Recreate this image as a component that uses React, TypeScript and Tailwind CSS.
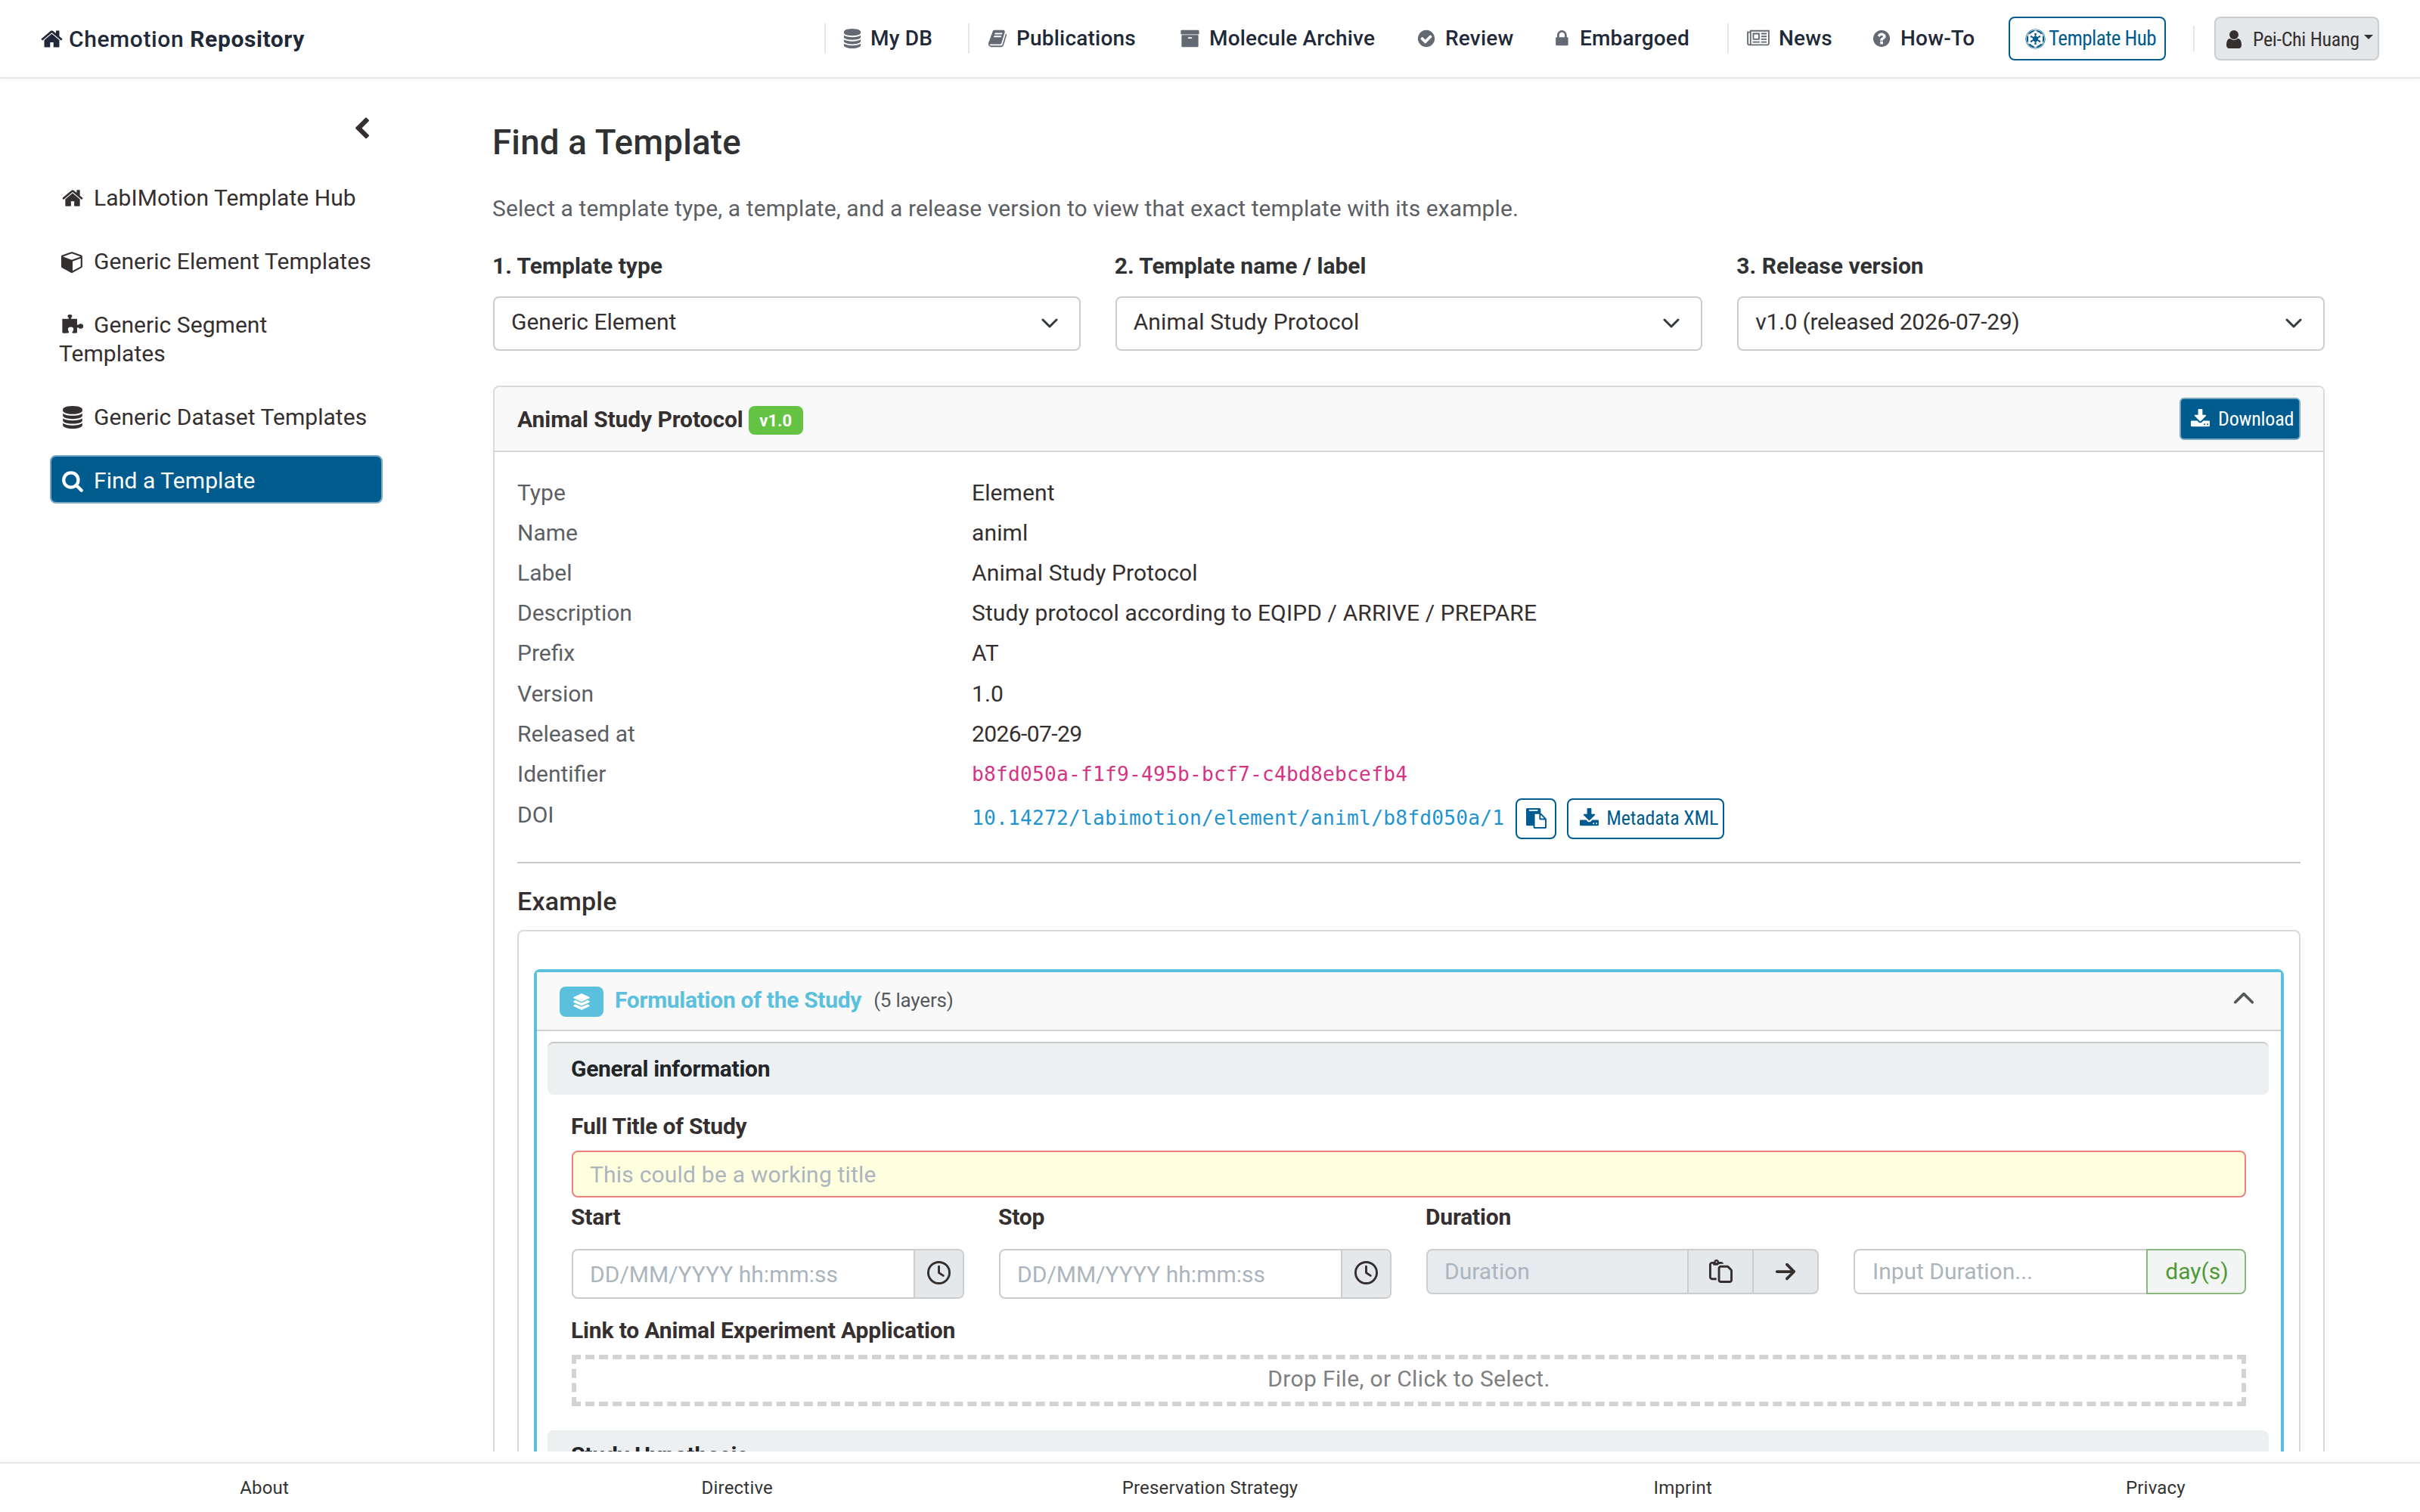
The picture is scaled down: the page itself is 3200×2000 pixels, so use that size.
import React from 'react';
import { FaArrowRight, FaChevronUp, FaEmpire, FaLayerGroup, FaRegClock, FaRegPaste } from 'react-icons/fa6';

interface GlyphProps {
  d: string;
  className?: string;
  viewBox?: string;
}

const Glyph: React.FC<GlyphProps> = ({ d, className, viewBox = '0 0 1792 1792' }) => (
  <svg viewBox={viewBox} fill="currentColor" className={className} aria-hidden="true">
    <path d={d} />
  </svg>
);

const ICONS = {
  home: 'M1472 992v480q0 26-19 45t-45 19h-384v-384h-256v384h-384q-26 0-45-19t-19-45v-480q0-1 .5-3t.5-3l575-474 575 474q1 2 1 6zm223-69l-62 74q-8 9-21 11h-3q-13 0-21-7l-692-577-692 577q-12 8-24 7-13-2-21-11l-62-74q-8-10-7-23.5t11-21.5l719-599q32-26 76-26t76 26l244 204v-195q0-14 9-23t23-9h192q14 0 23 9t9 23v408l219 182q10 8 11 21.5t-7 23.5z',
  cube: 'M896 1629l640-349v-636l-640 233v752zm-64-865l698-254-698-254-698 254zm832-252v768q0 35-18 65t-49 47l-704 384q-28 16-61 16t-61-16l-704-384q-31-17-49-47t-18-65v-768q0-40 23-73t61-47l704-256q22-8 44-8t44 8l704 256q38 14 61 47t23 73z',
  database: 'M832 768q237 0 443-43t325-127v170q0 69-103 128t-280 93.5-385 34.5-385-34.5-280-93.5-103-128v-170q119 84 325 127t443 43zm0 768q237 0 443-43t325-127v170q0 69-103 128t-280 93.5-385 34.5-385-34.5-280-93.5-103-128v-170q119 84 325 127t443 43zm0-384q237 0 443-43t325-127v170q0 69-103 128t-280 93.5-385 34.5-385-34.5-280-93.5-103-128v-170q119 84 325 127t443 43zm0-1152q208 0 385 34.5t280 93.5 103 128v128q0 69-103 128t-280 93.5-385 34.5-385-34.5-280-93.5-103-128v-128q0-69 103-128t280-93.5 385-34.5z',
  search: 'M1216 832q0-185-131.5-316.5t-316.5-131.5-316.5 131.5-131.5 316.5 131.5 316.5 316.5 131.5 316.5-131.5 131.5-316.5zm512 832q0 52-38 90t-90 38q-54 0-90-38l-343-342q-179 124-399 124-143 0-273.5-55.5t-225-150-150-225-55.5-273.5 55.5-273.5 150-225 225-150 273.5-55.5 273.5 55.5 225 150 150 225 55.5 273.5q0 220-124 399l343 343q37 37 37 90z',
  puzzle: 'M82 410H560Q600 410 592 350Q584 310 550 280Q500 235 500 180Q500 60 680 60Q860 60 860 180Q860 235 810 280Q776 310 768 350Q760 410 800 410H1250V830Q1250 900 1310 880Q1350 870 1400 830Q1450 790 1520 790Q1740 790 1740 990Q1740 1180 1520 1180Q1450 1180 1400 1130Q1350 1090 1310 1085Q1250 1080 1250 1150V1490Q1250 1530 1140 1530Q860 1560 860 1480Q860 1440 910 1390Q970 1330 970 1230Q970 1040 750 1040Q530 1040 530 1230Q530 1330 580 1390Q620 1440 600 1480Q580 1530 440 1530Q82 1570 82 1500Z',
  download: 'M1344 1344q0-26-19-45t-45-19-45 19-19 45 19 45 45 19 45-19 19-45zm256 0q0-26-19-45t-45-19-45 19-19 45 19 45 45 19 45-19 19-45zm128-224v320q0 40-28 68t-68 28h-1472q-40 0-68-28t-28-68v-320q0-40 28-68t68-28h465l135 136q58 56 136 56t136-56l136-136h464q40 0 68 28t28 68zm-325-569q17 41-14 70l-448 448q-18 19-45 19t-45-19l-448-448q-31-29-14-70 17-39 59-39h256v-448q0-26 19-45t45-19h256q26 0 45 19t19 45v448h256q42 0 59 39z',
  paste: 'M768 1664h896v-640h-416q-40 0-68-28t-28-68v-416h-384v1152zm256-1440v-64q0-13-9.5-22.5t-22.5-9.5h-704q-13 0-22.5 9.5t-9.5 22.5v64q0 13 9.5 22.5t22.5 9.5h704q13 0 22.5-9.5t9.5-22.5zm256 672h299l-299-299v299zm512 128v672q0 40-28 68t-68 28h-960q-40 0-68-28t-28-68v-160h-544q-40 0-68-28t-28-68v-1344q0-40 28-68t68-28h1088q40 0 68 28t28 68v328q21 13 36 28l408 408q28 28 48 76t20 88z',
  user: 'M1536 1399q0 109-62.5 187t-150.5 78h-854q-88 0-150.5-78t-62.5-187q0-85 8.5-160.5t31.5-152 58.5-131 94-89 134.5-34.5q131 128 313 128t313-128q76 0 134.5 34.5t94 89 58.5 131 31.5 152 8.5 160.5zm-256-887q0 159-112.5 271.5t-271.5 112.5-271.5-112.5-112.5-271.5 112.5-271.5 271.5-112.5 271.5 112.5 112.5 271.5z',
  check: 'M1412 734q0-28-18-46l-91-90q-19-19-45-19t-45 19l-408 407-226-226q-19-19-45-19t-45 19l-91 90q-18 18-18 46 0 27 18 45l362 362q19 19 45 19 27 0 46-19l543-543q18-18 18-45zm252 162q0 209-103 385.5t-279.5 279.5-385.5 103-385.5-103-279.5-279.5-103-385.5 103-385.5 279.5-279.5 385.5-103 385.5 103 279.5 279.5 103 385.5z',
  question: 'M1024 1376v-192q0-14-9-23t-23-9h-192q-14 0-23 9t-9 23v192q0 14 9 23t23 9h192q14 0 23-9t9-23zm256-672q0-88-55.5-163t-138.5-116-170-41q-243 0-371 213-15 24 8 42l132 100q7 6 19 6 16 0 25-12 53-68 86-92 34-24 86-24 48 0 85.5 26t37.5 59q0 38-20 61t-68 45q-63 28-115.5 86.5t-52.5 125.5v36q0 14 9 23t23 9h192q14 0 23-9t9-23q0-19 21.5-49.5t54.5-49.5q32-18 49-28.5t46-35 44.5-48 28-60.5 12.5-81zm384 192q0 209-103 385.5t-279.5 279.5-385.5 103-385.5-103-279.5-279.5-103-385.5 103-385.5 279.5-279.5 385.5-103 385.5 103 279.5 279.5 103 385.5z',
  lock: 'M640 768h512v-192q0-106-75-181t-181-75-181 75-75 181v192zm832 96v576q0 40-28 68t-68 28h-960q-40 0-68-28t-28-68v-576q0-40 28-68t68-28h32v-192q0-184 132-316t316-132 316 132 132 316v192h32q40 0 68 28t28 68z',
  archive: 'M1088 832q0-26-19-45t-45-19h-256q-26 0-45 19t-19 45 19 45 45 19h256q26 0 45-19t19-45zm576-192v960q0 26-19 45t-45 19h-1408q-26 0-45-19t-19-45v-960q0-26 19-45t45-19h1408q26 0 45 19t19 45zm64-448v256q0 26-19 45t-45 19h-1536q-26 0-45-19t-19-45v-256q0-26 19-45t45-19h1536q26 0 45 19t19 45z',
  newspaper: 'M1024 512h-384v384h384v-384zm128 640v128h-640v-128h640zm0-768v640h-640v-640h640zm640 768v128h-512v-128h512zm0-256v128h-512v-128h512zm0-256v128h-512v-128h512zm0-256v128h-512v-128h512zm-1536 960v-960h-128v960q0 26 19 45t45 19 45-19 19-45zm1664 0v-1088h-1536v1088q0 33-11 64h1483q26 0 45-19t19-45zm128-1216v1216q0 80-56 136t-136 56h-1664q-80 0-136-56t-56-136v-1088h256v-128h1792z',
  book: 'M1703 478q40 57 18 129l-275 906q-19 64-76.5 107.5t-122.5 43.5h-923q-77 0-148.5-53.5t-99.5-131.5q-24-67-2-127 0-4 3-27t4-37q1-8-3-21.5t-3-19.5q2-11 8-21t16.5-23.5 16.5-23.5q23-38 45-91.5t30-91.5q3-10 .5-30t-.5-28q3-11 17-28t17-23q21-36 42-92t25-90q1-9-2.5-32t.5-28q4-13 22-30.5t22-22.5q19-26 42.5-84.5t27.5-96.5q1-8-3-25.5t-2-26.5q2-8 9-18t18-23 17-21q8-12 16.5-30.5t15-35 16-36 19.5-32 26.5-23.5 36-11.5 47.5 5.5l-1 3q38-9 51-9h761q74 0 114 56t18 130l-274 906q-36 119-71.5 153.5t-128.5 34.5h-869q-27 0-38 15-11 16-1 43 24 70 144 70h923q29 0 56-15.5t35-41.5l300-987q7-22 5-57 38 15 59 43zm-1064 2q-4 13 2 22.5t20 9.5h608q13 0 25.5-9.5t16.5-22.5l21-64q4-13-2-22.5t-20-9.5h-608q-13 0-25.5 9.5t-16.5 22.5zm-83 256q-4 13 2 22.5t20 9.5h608q13 0 25.5-9.5t16.5-22.5l21-64q4-13-2-22.5t-20-9.5h-608q-13 0-25.5 9.5t-16.5 22.5z',
  chevronLeft: 'M1427 301l-531 531 531 531q19 19 19 45t-19 45l-166 166q-19 19-45 19t-45-19l-742-742q-19-19-19-45t19-45l742-742q19-19 45-19t45 19l166 166q19 19 19 45t-19 45z',
};

const NavItem = ({ icon, label, className = '' }: { icon: React.ReactNode; label: string; className?: string }) => (
  <a className={`flex items-center text-[28px] font-medium tracking-[0.2px] text-[#1f2937] ${className}`}>
    <span className="mr-3 flex text-[#646a74]">{icon}</span>
    {label}
  </a>
);

const Header = () => (
  <header className="flex h-[104px] shrink-0 items-center border-b-2 border-[#e5e7eb] bg-white pl-[53px] pr-[54px] shadow-[0_2px_6px_rgba(0,0,0,0.04)]">
    <div className="flex items-center text-[30px] tracking-[0.6px] text-[#1f2937]">
      <Glyph d={ICONS.home} className="mr-[7px] h-[31px] w-[31px]" />
      <span className="font-medium whitespace-pre">Chemotion </span>
      <span className="font-bold">Repository</span>
    </div>
    <nav className="ml-auto flex items-center">
      <div className="flex h-10 items-center border-l-2 border-[#e5e7eb]">
        <NavItem label="My DB" className="w-[188px] pl-[23px]" icon={<Glyph d={ICONS.database} viewBox="0 0 1664 1792" className="h-[26px] w-6" />} />
      </div>
      <div className="flex h-10 items-center border-l-2 border-[#e5e7eb]">
        <NavItem label="Publications" className="w-[278px] pl-6" icon={<Glyph d={ICONS.book} className="h-[26px] w-[26px]" />} />
        <NavItem label="Molecule Archive" className="w-[313px]" icon={<Glyph d={ICONS.archive} className="h-[26px] w-[27px]" />} />
        <NavItem label="Review" className="w-[183px]" icon={<Glyph d={ICONS.check} className="h-[26px] w-[26px]" />} />
        <NavItem label="Embargoed" className="w-[228px]" icon={<Glyph d={ICONS.lock} viewBox="240 0 1472 1792" className="h-[26px] w-[21px]" />} />
      </div>
      <div className="flex h-10 items-center border-l-2 border-[#e5e7eb]">
        <NavItem label="News" className="w-[190px] pl-6" icon={<Glyph d={ICONS.newspaper} viewBox="0 0 2048 1792" className="h-[26px] w-[30px]" />} />
        <NavItem label="How-To" className="w-[180px]" icon={<Glyph d={ICONS.question} viewBox="64 0 1728 1792" className="h-[26px] w-[25px]" />} />
      </div>
      <button className="flex h-[58px] w-[208px] items-center rounded-lg border-2 border-[#005b8f] pl-5 font-['Roboto_Condensed','Roboto',sans-serif] font-stretch-semi-condensed text-[27px] tracking-[-0.5px] whitespace-nowrap text-[#005b8f]">
        <FaEmpire className="mr-1 h-[27px] w-[27px] shrink-0" />
        Template Hub
      </button>
      <div className="ml-9 h-[34px] w-0.5 bg-[#e5e7eb]" />
      <button className="ml-[26px] flex h-[58px] w-[218px] items-center rounded-lg border-2 border-[#cdcdcd] bg-[#e4e8eb] pt-0.5 pl-2.5 font-['Roboto_Condensed','Roboto',sans-serif] font-stretch-semi-condensed text-[26px] tracking-[-0.3px] whitespace-nowrap text-[#352f30]">
        <Glyph d={ICONS.user} className="mr-[11px] h-7 w-7 shrink-0" />
        Pei-Chi Huang
        <svg viewBox="0 0 12 6" className="mr-1.5 mb-1.5 ml-auto h-1.5 w-3 shrink-0" fill="currentColor">
          <path d="M0 0h12L6 6z" />
        </svg>
      </button>
    </nav>
  </header>
);

const MENU = [
  { label: 'LabIMotion Template Hub', icon: ICONS.home, box: '0 0 1792 1792' },
  { label: 'Generic Element Templates', icon: ICONS.cube, box: '0 0 1792 1792' },
  { label: 'Generic Segment Templates', icon: ICONS.puzzle, box: '0 0 1792 1792' },
  { label: 'Generic Dataset Templates', icon: ICONS.database, box: '-64 0 1792 1792' },
  { label: 'Find a Template', icon: ICONS.search, box: '0 0 1792 1792', active: true },
];

const Sidebar = () => (
  <aside className="flex w-[506px] shrink-0 flex-col pl-[66px] pt-[51px]">
    <Glyph d={ICONS.chevronLeft} className="mr-3 h-[31px] w-[31px] self-end text-[#352f30]" />
    <ul className="mt-[42px] flex flex-col gap-5">
      {MENU.map((item) => (
        <li
          key={item.label}
          className={
            item.active
              ? 'rounded-lg border-2 border-[#7aa9c4] bg-[#005b8f] px-2.5 pt-[13px] pb-[9px] text-[30px] leading-[38px] tracking-[0.05px] text-white'
              : 'rounded-lg border-2 border-transparent px-2.5 pt-[13px] pb-[9px] text-[30px] leading-[38px] tracking-[0.05px] text-[#352f30]'
          }
        >
          <Glyph d={item.icon} viewBox={item.box} className="ml-[3px] mr-[13px] inline-block h-[30px] w-[30px] align-[-5px]" />
          {item.label}
        </li>
      ))}
    </ul>
  </aside>
);

const Select = ({ label, value, valueClass = '' }: { label: string; value: string; valueClass?: string }) => (
  <div className="flex-1">
    <label className="-ml-px block text-[30px] leading-[45px] font-bold text-[#2f3133]">{label}</label>
    <div className="mt-[18px] flex h-[72px] items-center justify-between rounded-lg border-2 border-[#cdcdcd] bg-white pl-[22px] pr-7">
      <span className={`-mt-1.5 text-[30px] ${valueClass}`}>{value}</span>
      <svg viewBox="0 0 22 14" className="h-3.5 w-[22px]" fill="none" stroke="#343a40" strokeWidth="3" strokeLinecap="round" strokeLinejoin="round">
        <path d="M2 2l9 9 9-9" />
      </svg>
    </div>
  </div>
);

const DETAILS = [
  ['Type', 'Element'],
  ['Name', 'animl'],
  ['Label', 'Animal Study Protocol'],
  ['Description', 'Study protocol according to EQIPD / ARRIVE / PREPARE'],
  ['Prefix', 'AT'],
  ['Version', '1.0'],
  ['Released at', '2026-07-29'],
];

const DateField = ({ label }: { label: string }) => (
  <div className="flex-1">
    <div className="-ml-px pt-px leading-[45px] font-bold tracking-[-0.2px]">{label}</div>
    <div className="mt-5 flex h-[66px] overflow-hidden rounded-lg border-2 border-[#cdcdcd]">
      <div className="flex flex-1 items-center pt-px pl-[22px] text-[#abb5be]">DD/MM/YYYY hh:mm:ss</div>
      <div className="flex w-[65px] items-center justify-center border-l-2 border-[#cdcdcd] bg-[#e4e8eb]">
        <FaRegClock className="-mt-0.5 h-[31px] w-[31px]" />
      </div>
    </div>
  </div>
);

const StudyForm = () => (
  <div className="mt-[14px] mr-4 ml-[14px]">
    <div className="h-[70px] rounded-lg border-t-2 border-[#c8c8c8] bg-[#ecf0f1] pl-[31px] text-[30px] leading-[67px] font-bold tracking-[-0.3px] text-[#212529]">
      General information
    </div>
    <div className="pt-[19px] pr-[30px] pl-8">
      <div className="-ml-px leading-[45px] font-bold tracking-[-0.2px]">Full Title of Study</div>
      <div className="mt-[10px] flex h-[62px] items-center rounded-lg border-2 border-[#f08080] bg-[#ffffe0] pt-px pl-[22px] tracking-[0.2px] text-[#abb5be]">
        This could be a working title
      </div>
      <div className="mt-[2px] flex gap-[46px]">
        <DateField label="Start" />
        <DateField label="Stop" />
        <div className="flex-1">
          <div className="-ml-px pt-px leading-[45px] font-bold tracking-[-0.2px]">Duration</div>
          <div className="mt-5 flex h-[60px] overflow-hidden rounded-lg border-2 border-[#cdcdcd] bg-[#e4e8eb]">
            <div className="flex flex-1 items-center bg-[#e7ebee] pl-[22px] text-[#abb5be]">Duration</div>
            <div className="flex w-[86px] items-center justify-center border-l-2 border-[#cdcdcd]">
              <FaRegPaste className="h-[31px] w-[31px]" />
            </div>
            <div className="flex w-[86px] items-center justify-center border-l-2 border-[#cdcdcd]">
              <FaArrowRight className="h-[30px] w-[30px]" />
            </div>
          </div>
        </div>
        <div className="flex-1 pt-[66px]">
          <div className="flex h-[60px]">
            <div className="flex flex-1 items-center rounded-l-lg border-2 border-r-0 border-[#cdcdcd] pl-[23px] text-[#abb5be]">
              Input Duration...
            </div>
            <div className="flex w-[132px] items-center justify-center rounded-r-lg border-2 border-[#8bb77f] bg-[#f3f5f5] pl-0.5 text-[#4e9a35]">
              day(s)
            </div>
          </div>
        </div>
      </div>
      <div className="-ml-px mt-[19px] leading-[45px] font-bold tracking-[-0.16px]">Link to Animal Experiment Application</div>
      <div className="mt-[10px] flex h-[68px] items-center justify-center border-6 border-dashed border-[#d3d3d3]">
        <span className="-mt-1 tracking-[0.35px] text-[#808080]">Drop File, or Click to Select.</span>
      </div>
    </div>
    <div className="mt-8 h-[70px] rounded-lg bg-[#ecf0f1] pl-[31px] text-[30px] leading-[65px] font-bold tracking-[-0.15px] text-[#212529]">
      Study Hypothesis
    </div>
  </div>
);

const TemplateCard = () => (
  <section className="mt-[46px] rounded-lg border-2 border-[#dadada]">
    <div className="flex h-[86px] items-center justify-between rounded-t-md border-b-2 border-[#d5d5d5] bg-[#f9f9f9] px-[30px]">
      <div className="flex items-center gap-[7px]">
        <h2 className="text-[30px] font-bold tracking-[-0.1px]">Animal Study Protocol</h2>
        <span className="mt-1 flex h-[38px] w-[72px] items-center justify-center rounded-lg bg-[#64c343] text-[22px] font-bold text-white">v1.0</span>
      </div>
      <button className="flex h-14 w-40 items-center rounded-md border-2 border-[#7aa9c4] bg-[#005b8f] pl-3 font-['Roboto_Condensed','Roboto',sans-serif] font-stretch-semi-condensed text-[26px] tracking-[-0.2px] whitespace-nowrap text-white">
        <Glyph d={ICONS.download} viewBox="0 0 1728 1792" className="mr-[11px] h-[27px] w-[26px] shrink-0" />
        Download
      </button>
    </div>
    <div className="px-[30px] pt-[27px]">
      <dl className="text-[30px]">
        {DETAILS.map(([term, value]) => (
          <div key={term} className="flex h-[53.1px] items-center">
            <dt className="w-[601px] text-[#5c6064]">{term}</dt>
            <dd className={term === 'Released at' ? 'tracking-[-0.6px]' : 'tracking-[0.12px]'}>{value}</dd>
          </div>
        ))}
        <div className="flex h-[53.2px] items-center">
          <dt className="w-[601px] text-[#5c6064]">Identifier</dt>
          <dd className="mt-0.5 font-['DejaVu_Sans_Mono',monospace] text-[26.25px] tracking-[0.2px] text-[#d63384]">b8fd050a-f1f9-495b-bcf7-c4bd8ebcefb4</dd>
        </div>
        <div className="flex h-[89.7px] pt-px">
          <dt className="w-[601px] leading-[53px] text-[#5c6064]">DOI</dt>
          <dd className="mt-[5px] flex h-[54px] items-center">
            <a className="-mt-[1px] font-['DejaVu_Sans_Mono',monospace] text-[26.25px] tracking-[0.2px] text-[#1f94d2]">
              10.14272/labimotion/element/animl/b8fd050a/1
            </a>
            <button className="ml-[15px] flex h-[54px] w-[54px] items-center justify-center rounded-lg border-2 border-[#005b8f] text-[#005b8f]">
              <Glyph d={ICONS.paste} className="h-[27px] w-[27px]" />
            </button>
            <button className="ml-[14px] flex h-[54px] w-[208px] items-center rounded-lg border-2 border-[#005b8f] pl-[14px] font-['Roboto_Condensed','Roboto',sans-serif] font-stretch-semi-condensed text-[26px] tracking-[-0.15px] whitespace-nowrap text-[#005b8f]">
              <Glyph d={ICONS.download} viewBox="0 0 1728 1792" className="mr-[10px] h-[27px] w-[26px] shrink-0" />
              Metadata XML
            </button>
          </dd>
        </div>
      </dl>
      <hr className="border-t-2 border-[#c8c8c8]" />
      <h3 className="mt-[30px] text-[34px] leading-[40px] font-medium tracking-[0.2px]">Example</h3>
      <div className="mt-[18px] rounded-t-lg border-2 border-b-0 border-[#dadada] px-5 pt-[50px] text-[30px]">
        <div className="rounded-t-lg border-4 border-b-0 border-[#5bc0de]">
          <div className="flex h-[78px] items-center border-b-2 border-[#d0d0d0] bg-[#f9f9f9] px-[30px]">
            <span className="mt-0.5 flex h-10 w-[58px] items-center justify-center rounded-lg bg-[#5bc0de] text-white">
              <FaLayerGroup className="h-6 w-6" />
            </span>
            <span className="-mt-[3px] ml-[15px] font-bold tracking-[-0.3px] text-[#5bc0de]">Formulation of the Study</span>
            <span className="ml-4 text-[26px] tracking-[-0.2px] text-[#55595c]">(5 layers)</span>
            <FaChevronUp className="-mt-1 mr-1 ml-auto h-[30px] w-[30px] text-[#55595c]" />
          </div>
          <StudyForm />
        </div>
      </div>
    </div>
  </section>
);

const LINKS = ['About', 'Directive', 'Preservation Strategy', 'Imprint', 'Privacy'];

export default function App() {
  return (
    <div className="flex h-[2000px] w-[3200px] flex-col overflow-hidden bg-white font-['Roboto',sans-serif] text-[#352f30]">
      <Header />
      <div className="flex h-[1816px] shrink-0 overflow-hidden">
        <Sidebar />
        <main className="ml-[146px] w-[2422px] pt-[58px]">
          <h1 className="-ml-px text-[45.7px] leading-[54px] font-medium tracking-[0.2px] text-[#2f3133]">Find a Template</h1>
          <p className="-ml-px mt-[37px] text-[30px] leading-[45px] tracking-[0.1px] text-[#5c6064]">
            Select a template type, a template, and a release version to view that exact template with its example.
          </p>
          <div className="mt-[31px] flex gap-[46px]">
            <Select label="1. Template type" value="Generic Element" />
            <Select label="2. Template name / label" value="Animal Study Protocol" valueClass="tracking-[0.12px]" />
            <Select label="3. Release version" value="v1.0 (released 2026-07-29)" valueClass="tracking-[-0.3px]" />
          </div>
          <TemplateCard />
        </main>
      </div>
      <footer className="mt-[14px] flex h-[66px] items-center border-t-2 border-[#e5e7eb] px-[37px] shadow-[0_-2px_6px_rgba(0,0,0,0.04)]">
        {LINKS.map((link) => (
          <a key={link} className="flex-1 text-center text-[24px] tracking-[0.2px] text-[#333333]">
            {link}
          </a>
        ))}
      </footer>
    </div>
  );
}
